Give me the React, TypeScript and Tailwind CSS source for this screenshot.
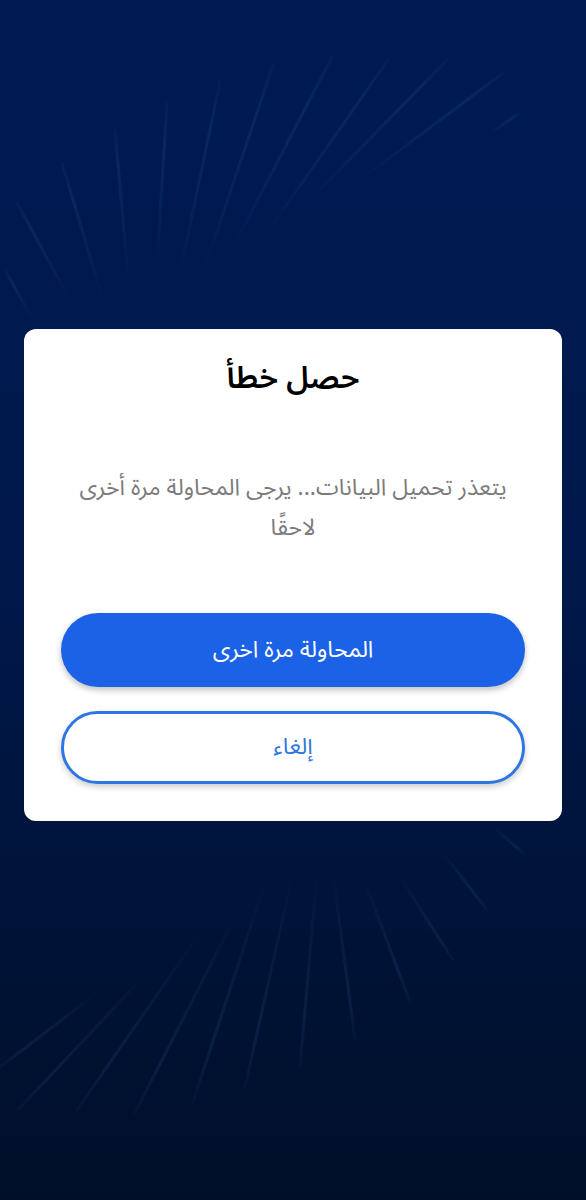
const topLines: [number, number, number, number][] = [
  [5, 270, 33, 320],
  [17, 203, 70, 300],
  [62, 163, 103, 300],
  [115, 130, 128, 277],
  [167, 103, 157, 263],
  [220, 82, 180, 273],
  [273, 65, 203, 273],
  [332, 57, 230, 253],
  [388, 60, 267, 233],
  [447, 60, 310, 200],
  [503, 73, 360, 180],
  [520, 113, 490, 133],
];

const bottomLines: [number, number, number, number][] = [
  [0, 1067, 97, 993],
  [18, 1110, 147, 973],
  [77, 1110, 200, 933],
  [135, 1113, 237, 913],
  [193, 1102, 267, 877],
  [245, 1087, 293, 873],
  [300, 1067, 317, 873],
  [355, 1040, 333, 873],
  [410, 1002, 363, 877],
  [453, 960, 400, 877],
  [487, 910, 443, 853],
  [523, 853, 493, 827],
];

function Rays() {
  const lines = [...topLines, ...bottomLines];
  return (
    <svg
      className="pointer-events-none absolute inset-0"
      width="586"
      height="1200"
      viewBox="0 0 586 1200"
      aria-hidden
    >
      <defs>
        {lines.map(([x1, y1, x2, y2], i) => (
          <linearGradient key={i} id={`ray${i}`} gradientUnits="userSpaceOnUse" x1={x1} y1={y1} x2={x2} y2={y2}>
            <stop offset="0" stopColor="#3d72b8" stopOpacity="0.05" />
            <stop offset="0.25" stopColor="#3d72b8" stopOpacity="0.14" />
            <stop offset="0.7" stopColor="#3d72b8" stopOpacity="0.08" />
            <stop offset="1" stopColor="#3d72b8" stopOpacity="0" />
          </linearGradient>
        ))}
      </defs>
      {lines.map(([x1, y1, x2, y2], i) => (
        <line
          key={i}
          x1={x1}
          y1={y1}
          x2={x2}
          y2={y2}
          stroke={`url(#ray${i})`}
          strokeWidth="3"
          strokeLinecap="round"
        />
      ))}
    </svg>
  );
}

export default function App() {
  return (
    <div
      dir="rtl"
      className="relative min-h-[1200px] w-full overflow-hidden bg-gradient-to-b from-[#001b54] via-[#00184a] to-[#000f29] px-[24px] pt-[329px]"
      style={{ fontFamily: '"Noto Sans Arabic", "DejaVu Sans", sans-serif' }}
    >
      <Rays />
      <div className="relative flex flex-col items-center rounded-[12px] bg-white px-[37px] pt-[27px] pb-[37px]">
        <h1 className="text-[31px] leading-[44px] font-semibold text-black">حصل خطأ</h1>
        <p className="mt-[68px] px-[10px] text-center text-[23px] leading-[40px] text-[#7b7b7b]">
          يتعذر تحميل البيانات... يرجى المحاولة مرة أخرى لاحقًا
        </p>
        <div className="mt-[65px] flex w-full flex-col gap-[24px]">
          <button className="h-[74px] w-full rounded-full bg-[#1c62e7] text-[23px] text-white shadow-[0_3px_6px_rgba(0,0,0,0.25)]">
            المحاولة مرة اخرى
          </button>
          <button className="h-[73px] w-full rounded-full border-[3px] border-[#2e76e2] bg-white text-[23px] text-[#2e76e2] shadow-[0_3px_6px_rgba(0,0,0,0.2)]">
            إلغاء
          </button>
        </div>
      </div>
    </div>
  );
}
